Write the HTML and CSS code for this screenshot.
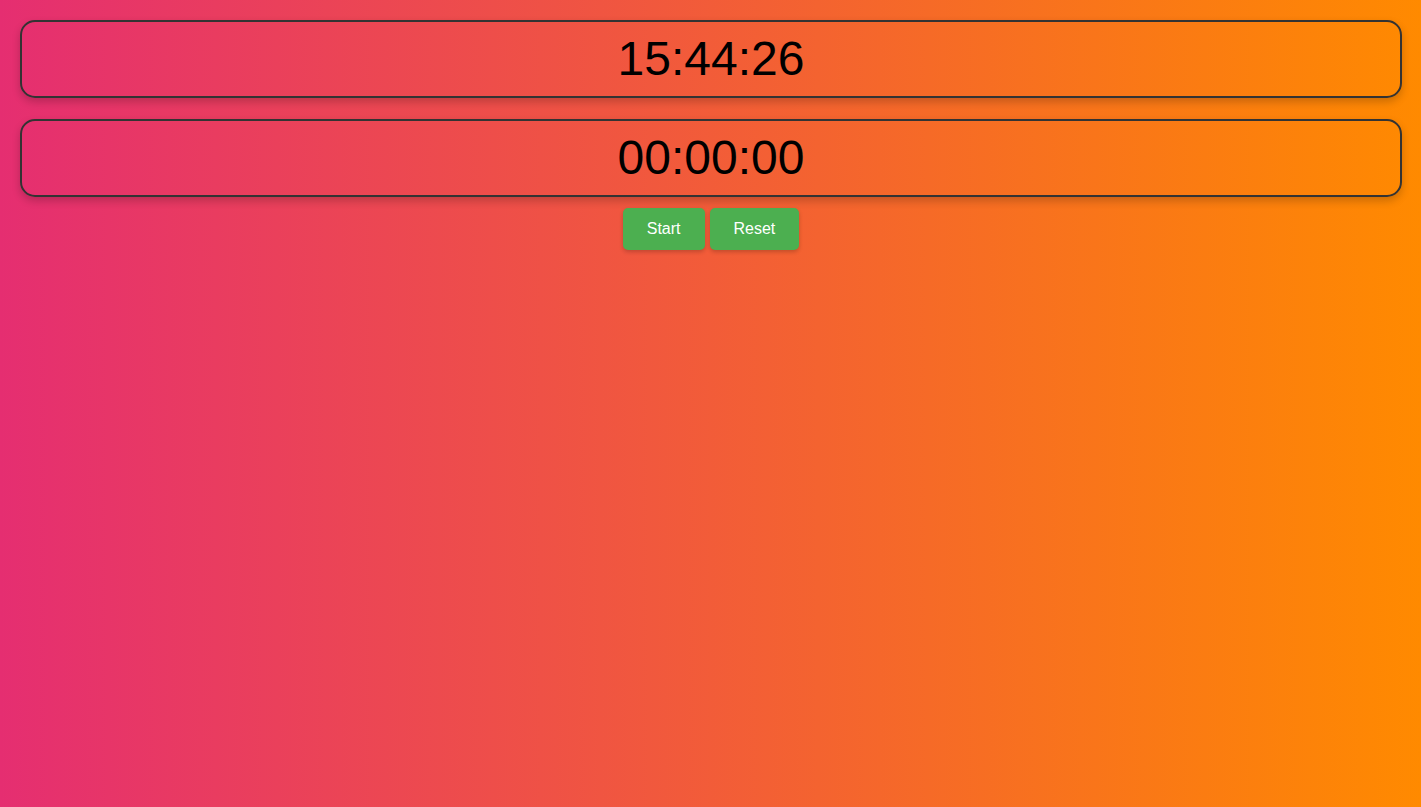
FILE: index.html
```html
<!DOCTYPE html>
<html lang="en">
<head>
<meta charset="utf-8">
<title>Clock</title>
<link rel="stylesheet" href="styles.css">
</head>
<body>
<div class="page">
  <div class="display">15:44:26</div>
  <div class="display">00:00:00</div>
  <div class="controls">
    <button class="btn">Start</button>
    <button class="btn">Reset</button>
  </div>
</div>
</body>
</html>
```
FILE: styles.css
```css
html, body {
  margin: 0;
  height: 100%;
}
body {
  background: linear-gradient(to right, #e52e71, #ff8a00);
  font-family: "Liberation Sans", Arial, sans-serif;
}
.page {
  padding: 20px 19px 0 20px;
  display: flex;
  flex-direction: column;
  gap: 21px;
}
.display {
  border: 2px solid #333;
  border-radius: 15px;
  padding: 10px;
  text-align: center;
  font-size: 48px;
  line-height: 54px;
  color: #000;
  box-shadow: 0 4px 8px rgba(0, 0, 0, 0.2);
}
.controls {
  display: flex;
  justify-content: center;
  gap: 5px;
  margin-top: -10px;
}
.btn {
  background: #4caf50;
  color: #fff;
  border: none;
  border-radius: 5px;
  padding: 12px 24px;
  font-family: "Liberation Sans", Arial, sans-serif;
  font-size: 16px;
  line-height: 18px;
  box-shadow: 0 2px 4px rgba(0, 0, 0, 0.2);
}
```
